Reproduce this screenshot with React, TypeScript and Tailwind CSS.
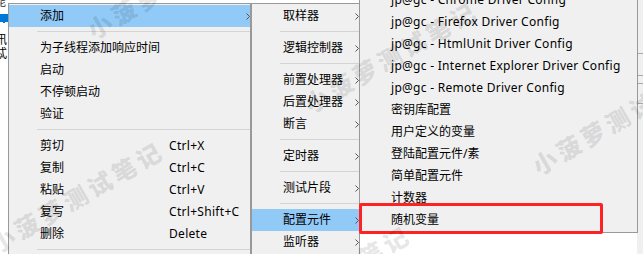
import React from "react";

type Item =
  | { label: string; shortcut?: string; sub?: boolean; active?: boolean }
  | "sep";

const Chevron = () => (
  <svg width="4" height="7" viewBox="0 0 4 7" className="shrink-0">
    <path d="M0.5 0.5 L3.5 3.5 L0.5 6.5" fill="none" stroke="#555" strokeWidth="1" />
  </svg>
);

const isLatin = (s: string) => /^[\x00-\x7f]+$/.test(s);

function Menu({ items, labelW }: { items: Item[]; labelW?: string }) {
  return (
    <div className="flex flex-col">
      {items.map((it, i) =>
        it === "sep" ? (
          <div key={i} className="h-[10px] pt-[4px] pl-[28px]">
            <div className="h-px bg-[#d4d4d4]" />
          </div>
        ) : (
          <div
            key={i}
            className={
              "h-[22px] flex items-center pl-[31px] " +
              (it.active ? "bg-[#91c9f7]" : "")
            }
          >
            <span
              className={
                "whitespace-nowrap " +
                (labelW ?? "") +
                (isLatin(it.label) ? " tracking-[0.28px]" : "")
              }
            >
              {it.label}
            </span>
            {it.shortcut && (
              <span className="whitespace-nowrap tracking-[0.3px]">{it.shortcut}</span>
            )}
            {it.sub && (
              <>
                <span className="flex-1" />
                <Chevron />
              </>
            )}
          </div>
        )
      )}
    </div>
  );
}

const menu1: Item[] = [
  { label: "添加", sub: true, active: true },
  "sep",
  { label: "为子线程添加响应时间" },
  { label: "启动" },
  { label: "不停顿启动" },
  { label: "验证" },
  "sep",
  { label: "剪切", shortcut: "Ctrl+X" },
  { label: "复制", shortcut: "Ctrl+C" },
  { label: "粘贴", shortcut: "Ctrl+V" },
  { label: "复写", shortcut: "Ctrl+Shift+C" },
  { label: "删除", shortcut: "Delete" },
  "sep",
];

const menu2: Item[] = [
  { label: "取样器", sub: true },
  "sep",
  { label: "逻辑控制器", sub: true },
  "sep",
  { label: "前置处理器", sub: true },
  { label: "后置处理器", sub: true },
  { label: "断言", sub: true },
  "sep",
  { label: "定时器", sub: true },
  "sep",
  { label: "测试片段", sub: true },
  "sep",
  { label: "配置元件", sub: true, active: true },
  { label: "监听器", sub: true },
];

const menu3: Item[] = [
  { label: "jp@gc - Chrome Driver Config" },
  { label: "jp@gc - Firefox Driver Config" },
  { label: "jp@gc - HtmlUnit Driver Config" },
  { label: "jp@gc - Internet Explorer Driver Config" },
  { label: "jp@gc - Remote Driver Config" },
  { label: "密钥库配置" },
  { label: "用户定义的变量" },
  { label: "登陆配置元件/素" },
  { label: "简单配置元件" },
  { label: "计数器" },
  { label: "随机变量" },
];

const marks: { x: number; y: number }[] = [
  { x: -2, y: 256 },
  { x: 95, y: 42 },
  { x: 312, y: 116 },
  { x: 540, y: 178 },
  { x: 245, y: 340 },
];

export default function App() {
  return (
    <div className="relative w-[643px] h-[254px] overflow-hidden bg-[#f0f0f0] text-[12px] text-black font-['Noto_Sans','Noto_Sans_CJK_SC',sans-serif]">
      {/* background app strip */}
      <div className="flex h-full">
        <div className="w-[8px] h-full bg-white overflow-hidden flex flex-col text-[12px] leading-[14px]">
          <div className="-mt-[5px] -ml-[6px] text-[#333]">能</div>
          <div className="mt-[5px] h-[9px] bg-[#0078d7] border-b border-dashed border-white" />
          <div className="mt-[10px] -ml-[5px]">讯</div>
          <div className="-ml-[5px]">忒</div>
        </div>
        <div className="flex-1 bg-white" />
        <div className="w-[6px] flex flex-col">
          <div className="h-[53px]" />
          <div className="h-px bg-[#a8a8a8]" />
          <div className="h-[21px]" />
          <div className="h-px bg-[#a8a8a8]" />
          <div className="h-[7px]" />
          <div className="h-px bg-[#a8a8a8]" />
          <div className="h-[19px]" />
          <div className="h-px bg-[#a8a8a8]" />
        </div>
      </div>

      {/* menu 1 */}
      <div className="absolute left-[8px] top-[3px] w-[243px] h-[270px] bg-[#f0f0f0] border border-[#999] pt-px">
        <Menu items={menu1} labelW="w-[129px]" />
      </div>

      {/* menu 2 */}
      <div className="absolute left-[251px] top-[3px] w-[109px] h-[270px] bg-[#f0f0f0] border border-[#999] pt-px">
        <Menu items={menu2} />
      </div>

      {/* menu 3 */}
      <div className="absolute left-[359px] top-[-13px] w-[279px] bg-[#f0f0f0] border border-[#999] py-px">
        <Menu items={menu3} />
      </div>

      {/* highlight box */}
      <div className="absolute left-[359px] top-[203px] w-[244px] h-[31px] border-[3px] border-[#ff2222] rounded-[2px]" />

      {/* watermarks */}
      {marks.map((m, i) => (
        <div
          key={i}
          className="absolute pointer-events-none whitespace-nowrap text-[24px] leading-[24px] font-black tracking-[4px] text-black/[0.11] origin-bottom-left -rotate-30 font-['Noto_Sans_CJK_SC',sans-serif]"
          style={{ left: m.x, top: m.y - 24 }}
        >
          小菠萝测试笔记
        </div>
      ))}
    </div>
  );
}
